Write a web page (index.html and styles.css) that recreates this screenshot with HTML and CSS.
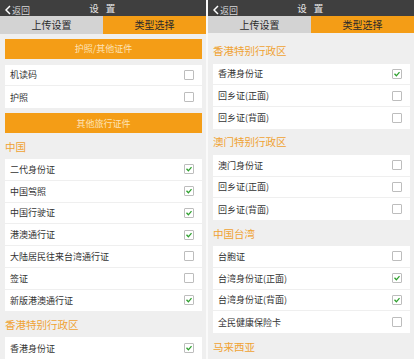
FILE: index.html
```html
<!DOCTYPE html>
<html lang="zh">
<head>
  <meta charset="UTF-8" />
  <meta name="viewport" content="width=device-width, initial-scale=1.0" />
  <title>设置 - 类型选择</title>
  <link rel="stylesheet" href="styles.css">
</head>
<body>
  <!-- 左侧屏幕 -->
  <div class="phone">
    <div class="topbar">
      <span class="back"><svg width="6" height="10" viewBox="0 0 6 10"><polyline points="5,1 1,5 5,9" fill="none" stroke="#fff" stroke-width="1.5"/></svg>返回</span>
      <span class="title">设 置</span>
    </div>
    <div class="tabs">
      <div class="tab">上传设置</div>
      <div class="tab active">类型选择</div>
    </div>
    <div class="content">
      <div class="group-btn">护照/其他证件</div>
      <div class="card">
        <div class="row"><span>机读码</span><i class="box"></i></div>
        <div class="row"><span>护照</span><i class="box"></i></div>
      </div>
      <div class="group-btn second">其他旅行证件</div>
      <div class="label">中国</div>
      <div class="card">
        <div class="row"><span>二代身份证</span><i class="box checked"></i></div>
        <div class="row"><span>中国驾照</span><i class="box checked"></i></div>
        <div class="row"><span>中国行驶证</span><i class="box checked"></i></div>
        <div class="row"><span>港澳通行证</span><i class="box checked"></i></div>
        <div class="row"><span>大陆居民往来台湾通行证</span><i class="box"></i></div>
        <div class="row"><span>签证</span><i class="box"></i></div>
        <div class="row"><span>新版港澳通行证</span><i class="box checked"></i></div>
      </div>
      <div class="label">香港特别行政区</div>
      <div class="card">
        <div class="row"><span>香港身份证</span><i class="box checked"></i></div>
      </div>
    </div>
  </div>

  <!-- 右侧屏幕 -->
  <div class="phone">
    <div class="topbar">
      <span class="back"><svg width="6" height="10" viewBox="0 0 6 10"><polyline points="5,1 1,5 5,9" fill="none" stroke="#fff" stroke-width="1.5"/></svg>返回</span>
      <span class="title">设 置</span>
    </div>
    <div class="tabs">
      <div class="tab">上传设置</div>
      <div class="tab active">类型选择</div>
    </div>
    <div class="content">
      <div class="label">香港特别行政区</div>
      <div class="card">
        <div class="row"><span>香港身份证</span><i class="box checked"></i></div>
        <div class="row"><span>回乡证(正面)</span><i class="box"></i></div>
        <div class="row"><span>回乡证(背面)</span><i class="box"></i></div>
      </div>
      <div class="label">澳门特别行政区</div>
      <div class="card">
        <div class="row"><span>澳门身份证</span><i class="box"></i></div>
        <div class="row"><span>回乡证(正面)</span><i class="box"></i></div>
        <div class="row"><span>回乡证(背面)</span><i class="box"></i></div>
      </div>
      <div class="label">中国台湾</div>
      <div class="card">
        <div class="row"><span>台胞证</span><i class="box"></i></div>
        <div class="row"><span>台湾身份证(正面)</span><i class="box checked"></i></div>
        <div class="row"><span>台湾身份证(背面)</span><i class="box checked"></i></div>
        <div class="row"><span>全民健康保险卡</span><i class="box"></i></div>
      </div>
      <div class="label">马来西亚</div>
    </div>
  </div>
</body>
</html>
```

FILE: styles.css
```css
body {
  margin: 0;
  background: #fafafa;
  font-family: "Noto Sans CJK SC", "Noto Sans", sans-serif;
  display: flex;
  gap: 2px;
  height: 359px;
  overflow: hidden;
}
.phone {
  width: 206px;
  height: 359px;
  background: #efefef;
  overflow: hidden;
  display: flex;
  flex-direction: column;
}

/* 顶部标题栏 */
.topbar {
  height: 20px;
  background: #3f3f3f;
  color: #e6e6e6;
  position: relative;
  display: flex;
  align-items: center;
  justify-content: center;
  font-size: 9.5px;
}
.topbar .back {
  position: absolute;
  left: 5px;
  top: 0;
  height: 20px;
  display: flex;
  align-items: center;
  gap: 1px;
  color: #d8d8d8;
  font-size: 9px;
}
.topbar .title {
  letter-spacing: 1.5px;
  word-spacing: 2px;
}

/* 标签页 */
.tabs {
  display: flex;
  height: 21px;
}
.tab {
  flex: 1;
  background: #d3d3d3;
  color: #2a2a2a;
  font-size: 10px;
  display: flex;
  align-items: center;
  justify-content: center;
}
.tab.active {
  background: #f49d16;
}

.content {
  padding: 5px 4px 0 5px;
}
.group-btn {
  height: 20px;
  background: #f49d16;
  color: #fde3b8;
  font-size: 9px;
  display: flex;
  align-items: center;
  justify-content: center;
  margin-bottom: 6px;
}
.group-btn.second {
  margin-top: 5px;
  margin-bottom: 0;
}
.label {
  height: 26px;
  display: flex;
  align-items: center;
  color: #f0a232;
  font-size: 10.5px;
}

.card {
  background: #fff;
}
.row {
  height: 21.75px;
  box-sizing: border-box;
  border-bottom: 1px solid #efefef;
  display: flex;
  align-items: center;
  justify-content: space-between;
  padding: 0 8px 0 5px;
  font-size: 9px;
  color: #333;
}
.row:last-child {
  border-bottom: none;
}
.box {
  width: 10px;
  height: 10px;
  box-sizing: border-box;
  border: 1px solid #bdbdbd;
  border-radius: 1px;
  background: #fff;
}
.box.checked {
  background: url("data:image/svg+xml,%3Csvg xmlns='http://www.w3.org/2000/svg' viewBox='0 0 8 8'%3E%3Cpolyline points='1.5,3.7 3.4,5.8 6.5,2.2' fill='none' stroke='%2330a030' stroke-width='1.3'/%3E%3C/svg%3E") center / 8px 8px no-repeat #fff;
}
```
